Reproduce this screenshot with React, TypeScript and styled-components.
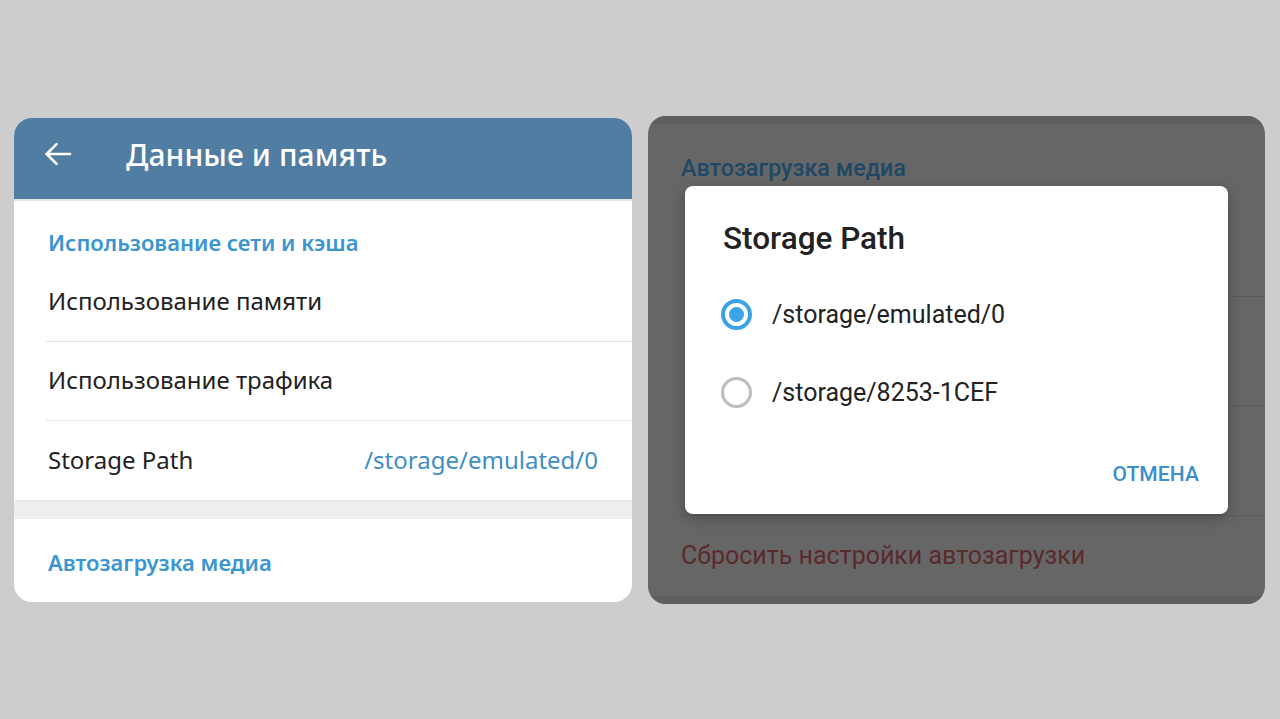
import React from 'react';
import styled, { createGlobalStyle } from 'styled-components';

const GlobalStyle = createGlobalStyle`
    html, body {
        margin: 0;
        padding: 0;
        background: #cdcdcd;
    }
    * {
        box-sizing: border-box;
    }
`;

const Page = styled.div`
    height: 719px;
    display: flex;
    align-items: center;
    gap: 16px;
    padding-left: 14px;
`;

/* ---------- left screen ---------- */

const SettingsCard = styled.div`
    width: 618px;
    height: 484px;
    background: #fff;
    border-radius: 18px;
    overflow: hidden;
    display: flex;
    flex-direction: column;
    font-family: 'Noto Sans', 'Open Sans', sans-serif;
`;

const TopBar = styled.div`
    height: 81px;
    flex: none;
    background: #527da3;
    display: flex;
    align-items: center;
    padding: 0 0 8px 27px;
    gap: 51px;
    box-shadow: 0 2px 0 #dfe6ec;
    position: relative;
    z-index: 1;
`;

const BackButton = styled.div`
    width: 34px;
    height: 34px;
    display: flex;
    align-items: center;
    justify-content: center;
`;

const Title = styled.div`
    color: #fff;
    font-size: 30px;
    font-weight: 500;
    letter-spacing: 0.1px;
`;

const SectionHeader = styled.div<{ $top: number; $height: number }>`
    height: ${(p) => p.$height}px;
    padding: ${(p) => p.$top}px 0 0 34px;
    color: #3a95d0;
    font-size: 22px;
    font-weight: 600;
    line-height: 26px;
    flex: none;
`;

const Row = styled.div<{ $divider?: boolean }>`
    height: 79px;
    flex: none;
    display: flex;
    align-items: center;
    justify-content: space-between;
    margin-left: 32px;
    padding: 0 34px 2px 2px;
    border-bottom: ${(p) => (p.$divider ? '1px solid #e4e4e4' : 'none')};
    font-size: 24px;
    color: #222;
`;

const RowValue = styled.span`
    color: #3f8ec4;
`;

const Gap = styled.div`
    height: 19px;
    flex: none;
    background: #efefef;
    box-shadow: inset 0 1px 0 #e6e6e6;
`;

/* ---------- right screen ---------- */

const DimmedCard = styled.div`
    width: 617px;
    height: 488px;
    background: #666;
    border-radius: 18px;
    overflow: hidden;
    position: relative;
    display: flex;
    flex-direction: column;
    font-family: Roboto, 'Liberation Sans', sans-serif;
`;

const Strip = styled.div`
    height: 8px;
    flex: none;
    background: #5f5f5f;
`;

const DimTitle = styled.div`
    height: 63px;
    flex: none;
    padding: 30px 0 0 33px;
    color: #1e4866;
    font-size: 23.3px;
    font-weight: 500;
    line-height: 28px;
`;

const DimRow = styled.div<{ $height: number }>`
    height: ${(p) => p.$height}px;
    flex: none;
    margin-left: 33px;
    border-bottom: 1px solid #5c5c5c;
`;

const DimReset = styled.div`
    flex: 1;
    display: flex;
    align-items: center;
    padding-left: 33px;
    color: #5a2a2d;
    font-size: 25px;
`;

const Dialog = styled.div`
    position: absolute;
    left: 37px;
    top: 70px;
    width: 543px;
    height: 328px;
    background: #fff;
    border-radius: 8px;
    box-shadow: 0 4px 14px rgba(0, 0, 0, 0.25);
    display: flex;
    flex-direction: column;
    padding: 0 29px 0 36px;
`;

const DialogTitle = styled.div`
    padding: 34px 0 0 2px;
    height: 90px;
    font-size: 31.5px;
    font-weight: 500;
    color: #222;
    line-height: 38px;
`;

const Option = styled.div`
    height: 78px;
    display: flex;
    align-items: center;
    gap: 20px;
    font-size: 25px;
    color: #222;
`;

const Radio = styled.span<{ $checked?: boolean }>`
    width: 31px;
    height: 31px;
    border-radius: 50%;
    border: ${(p) => (p.$checked ? '4px solid #3ba2e6' : '3px solid #bdbdbd')};
    display: flex;
    align-items: center;
    justify-content: center;
    flex: none;

    &::after {
        content: '';
        display: ${(p) => (p.$checked ? 'block' : 'none')};
        width: 15px;
        height: 15px;
        border-radius: 50%;
        background: #3ba2e6;
    }
`;

const Actions = styled.div`
    flex: 1;
    display: flex;
    justify-content: flex-end;
    align-items: center;
    padding-top: 2px;
`;

const TextButton = styled.div`
    color: #3a8fcc;
    font-size: 21px;
    font-weight: 500;
    letter-spacing: 0.1px;
`;

const BackArrow: React.FC = () => (
    <svg width="34" height="34" viewBox="0 0 24 24" fill="none" stroke="#fff" strokeWidth="1.8" strokeLinecap="round" strokeLinejoin="round">
        <path d="M20.5 12H4" />
        <path d="M11 5L4 12l7 7" />
    </svg>
);

const App: React.FC = () => (
    <>
        <GlobalStyle />
        <Page>
            <SettingsCard>
                <TopBar>
                    <BackButton>
                        <BackArrow />
                    </BackButton>
                    <Title>Данные и память</Title>
                </TopBar>
                <SectionHeader $top={30} $height={64}>Использование сети и кэша</SectionHeader>
                <Row $divider>Использование памяти</Row>
                <Row $divider>Использование трафика</Row>
                <Row>
                    Storage Path
                    <RowValue>/storage/emulated/0</RowValue>
                </Row>
                <Gap />
                <SectionHeader $top={30} $height={83}>Автозагрузка медиа</SectionHeader>
            </SettingsCard>

            <DimmedCard>
                <Strip />
                <DimTitle>Автозагрузка медиа</DimTitle>
                <DimRow $height={110} />
                <DimRow $height={109} />
                <DimRow $height={110} />
                <DimReset>Сбросить настройки автозагрузки</DimReset>
                <Strip />

                <Dialog>
                    <DialogTitle>Storage Path</DialogTitle>
                    <Option>
                        <Radio $checked />
                        /storage/emulated/0
                    </Option>
                    <Option>
                        <Radio />
                        /storage/8253-1CEF
                    </Option>
                    <Actions>
                        <TextButton>ОТМЕНА</TextButton>
                    </Actions>
                </Dialog>
            </DimmedCard>
        </Page>
    </>
);

export default App;
